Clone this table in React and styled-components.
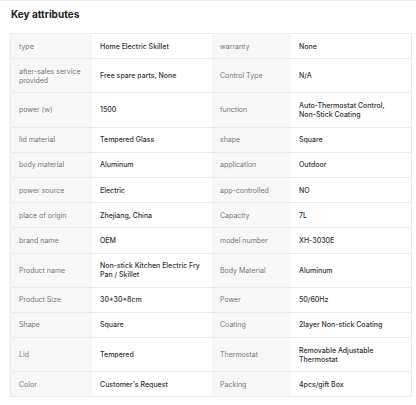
import styled, { createGlobalStyle } from "styled-components";

const GlobalStyle = createGlobalStyle`
  html, body {
    margin: 0;
    padding: 0;
    background: #fff;
    font-family: Inter, "Noto Sans", sans-serif;
  }
`;

const rows = [
  ["type", "Home Electric Skillet", "warranty", "None"],
  ["after-sales service provided", "Free spare parts, None", "Control Type", "N/A"],
  ["power (w)", "1500", "function", "Auto-Thermostat Control, Non-Stick Coating"],
  ["lid material", "Tempered Glass", "shape", "Square"],
  ["body material", "Aluminum", "application", "Outdoor"],
  ["power source", "Electric", "app-controlled", "NO"],
  ["place of origin", "Zhejiang, China", "Capacity", "7L"],
  ["brand name", "OEM", "model number", "XH-3030E"],
  ["Product name", "Non-stick Kitchen Electric Fry Pan / Skillet", "Body Material", "Aluminum"],
  ["Product Size", "30*30*8cm", "Power", "50/60Hz"],
  ["Shape", "Square", "Coating", "2layer Non-stick Coating"],
  ["Lid", "Tempered", "Thermostat", "Removable Adjustable Thermostat"],
  ["Color", "Customer's Request", "Packing", "4pcs/gift Box"],
];

export default function App() {
  return (
    <>
      <GlobalStyle />
      <Section>
        <Title>Key attributes</Title>
        <Grid>
          {rows.map((r, i) =>
            r.map((text, j) => (
              <Cell key={`${i}-${j}`} $label={j % 2 === 0}>
                {text}
              </Cell>
            ))
          )}
        </Grid>
      </Section>
    </>
  );
}

const Section = styled.div`
  border-top: 1px solid #ececec;
  padding: 7px 6px 0 10px;
`;

const Title = styled.h2`
  margin: 0 0 12px 1px;
  font-size: 10px;
  line-height: 13px;
  font-weight: 700;
  color: #222;
`;

const Grid = styled.div`
  width: 400px;
  display: grid;
  grid-template-columns: 81px 120px 79px 120px;
  border: 1px solid #ebebeb;
  border-bottom: none;
`;

const Cell = styled.div`
  display: flex;
  align-items: center;
  padding: 7.6px 8px;
  font-size: 7px;
  line-height: 9px;
  border-bottom: 1px solid #ebebeb;
  background: ${p => (p.$label ? "#f7f7f7" : "#fff")};
  color: ${p => (p.$label ? "#777" : "#333")};
  font-weight: ${p => (p.$label ? 400 : 500)};
`;
